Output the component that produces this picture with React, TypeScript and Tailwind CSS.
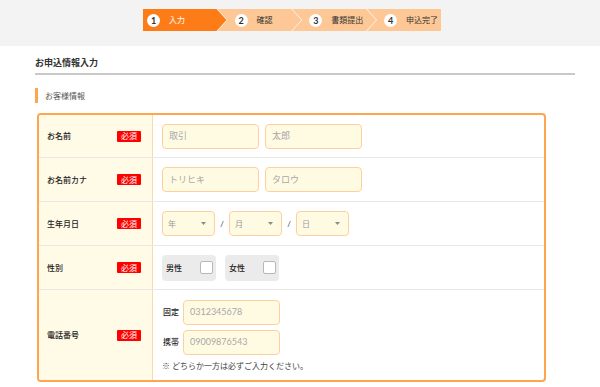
const font = "font-['Lato','Noto_Sans_CJK_JP',sans-serif]";

const steps = [
  { n: 1, label: '入力' },
  { n: 2, label: '確認' },
  { n: 3, label: '書類提出' },
  { n: 4, label: '申込完了' },
];

function Stepper() {
  return (
    <div className="ml-[143px] flex bg-[#fff4ea] w-[298px] h-[22px]">
      {steps.map((s, i) => {
        const first = i === 0;
        const last = i === steps.length - 1;
        const shape = first
          ? '[clip-path:polygon(0_0,calc(100%_-_10px)_0,100%_50%,calc(100%_-_10px)_100%,0_100%)] w-[85px] pl-[4px]'
          : last
          ? '[clip-path:polygon(0_0,100%_0,100%_100%,0_100%,10px_50%)] w-[75px] pl-[17px] -ml-[9px]'
          : '[clip-path:polygon(0_0,calc(100%_-_10px)_0,100%_50%,calc(100%_-_10px)_100%,0_100%,10px_50%)] w-[85px] pl-[17px] -ml-[9px]';
        return (
          <div
            key={s.n}
            className={`${shape} h-[22px] flex items-center ${
              first ? 'bg-[#fd7c17] text-white' : 'bg-[#fec796] text-[#333]'
            }`}
          >
            <span className="w-[13px] h-[13px] rounded-full bg-white text-[#333] text-[9px] font-bold flex items-center justify-center leading-none">
              {s.n}
            </span>
            <span className="ml-[9px] text-[8px] leading-none">{s.label}</span>
          </div>
        );
      })}
    </div>
  );
}

function Badge() {
  return (
    <span className="bg-[#ff0000] text-white text-[8px] leading-none h-[11px] px-[4px] flex items-center rounded-[1px]">
      必須
    </span>
  );
}

function Label({ text }: { text: string }) {
  return (
    <div className="w-[114px] shrink-0 bg-[#fffbe6] border-r border-[#ffd7ad] flex items-center justify-between pl-[8px] pr-[11px]">
      <span className="text-[8px] font-medium text-[#222]">{text}</span>
      <Badge />
    </div>
  );
}

function Input({ placeholder, w = 'w-[97px]' }: { placeholder: string; w?: string }) {
  return (
    <div className={`${w} h-[25px] bg-[#fffbe2] border-[1.5px] border-[#ffd09e] rounded-[4px] flex items-center pl-[6px] text-[9px] text-[#a8a8a8]`}>
      {placeholder}
    </div>
  );
}

function Select({ text }: { text: string }) {
  return (
    <div className="w-[53px] h-[25px] bg-[#fffbe2] border-[1.5px] border-[#ffd09e] rounded-[4px] flex items-center justify-between pl-[5px] pr-[8px] text-[8px] text-[#999]">
      <span>{text}</span>
      <svg width="5" height="3" viewBox="0 0 5 3">
        <path d="M0 0H5L2.5 3Z" fill="#8a8a8a" />
      </svg>
    </div>
  );
}

function Gender({ text }: { text: string }) {
  return (
    <div className="w-[54px] h-[26px] bg-[#ebebeb] rounded-[4px] flex items-center justify-between pl-[4px] pr-[3px]">
      <span className="text-[8px] font-medium text-[#222]">{text}</span>
      <span className="w-[13px] h-[13px] bg-white border border-[#b8b8b8] rounded-[2px]" />
    </div>
  );
}

export default function App() {
  return (
    <div className={`w-[600px] h-[387px] bg-white overflow-hidden ${font}`}>
      <div className="h-[46px] bg-[#f3f3f3] pt-[9px]">
        <Stepper />
      </div>

      <div className="pl-[35px] w-[575px]">
        <div className="mt-[11px] pb-[4px] border-b-2 border-[#c9c9c9]">
          <h1 className="text-[9px] leading-[12px] font-bold text-[#333]">お申込情報入力</h1>
        </div>

        <div className="mt-[13px] flex items-center h-[15px]">
          <span className="w-[3px] h-[15px] bg-[#ffa54f]" />
          <h2 className="ml-[7px] text-[8px] text-[#555]">お客様情報</h2>
        </div>

        <div className="mt-[10px] ml-[2px] w-[509px] border-2 border-[#ffa54f] rounded-[4px] overflow-hidden">
          <div className="flex h-[43px] border-b border-[#e8e8e8]">
            <Label text="お名前" />
            <div className="flex items-center gap-[6px] pl-[9px]">
              <Input placeholder="取引" />
              <Input placeholder="太郎" />
            </div>
          </div>

          <div className="flex h-[44px] border-b border-[#e8e8e8]">
            <Label text="お名前カナ" />
            <div className="flex items-center gap-[6px] pl-[9px]">
              <Input placeholder="トリヒキ" />
              <Input placeholder="タロウ" />
            </div>
          </div>

          <div className="flex h-[44px] border-b border-[#e8e8e8]">
            <Label text="生年月日" />
            <div className="flex items-center pl-[9px] text-[8px] text-[#333]">
              <Select text="年" />
              <span className="w-[14px] text-center">/</span>
              <Select text="月" />
              <span className="w-[14px] text-center">/</span>
              <Select text="日" />
            </div>
          </div>

          <div className="flex h-[44px] border-b border-[#e8e8e8]">
            <Label text="性別" />
            <div className="flex items-center gap-[9px] pl-[9px]">
              <Gender text="男性" />
              <Gender text="女性" />
            </div>
          </div>

          <div className="flex h-[90px]">
            <Label text="電話番号" />
            <div className="flex flex-col justify-center gap-[5px] pl-[10px]">
              <div className="flex items-center">
                <span className="w-[20px] text-[8px] font-medium text-[#222]">固定</span>
                <Input placeholder="0312345678" />
              </div>
              <div className="flex items-center">
                <span className="w-[20px] text-[8px] font-medium text-[#222]">携帯</span>
                <Input placeholder="09009876543" />
              </div>
              <p className="text-[8px] leading-[10px] text-[#444] -ml-[1px] mt-[1px]">
                ※ どちらか一方は必ずご入力ください。
              </p>
            </div>
          </div>
        </div>
      </div>
    </div>
  );
}
